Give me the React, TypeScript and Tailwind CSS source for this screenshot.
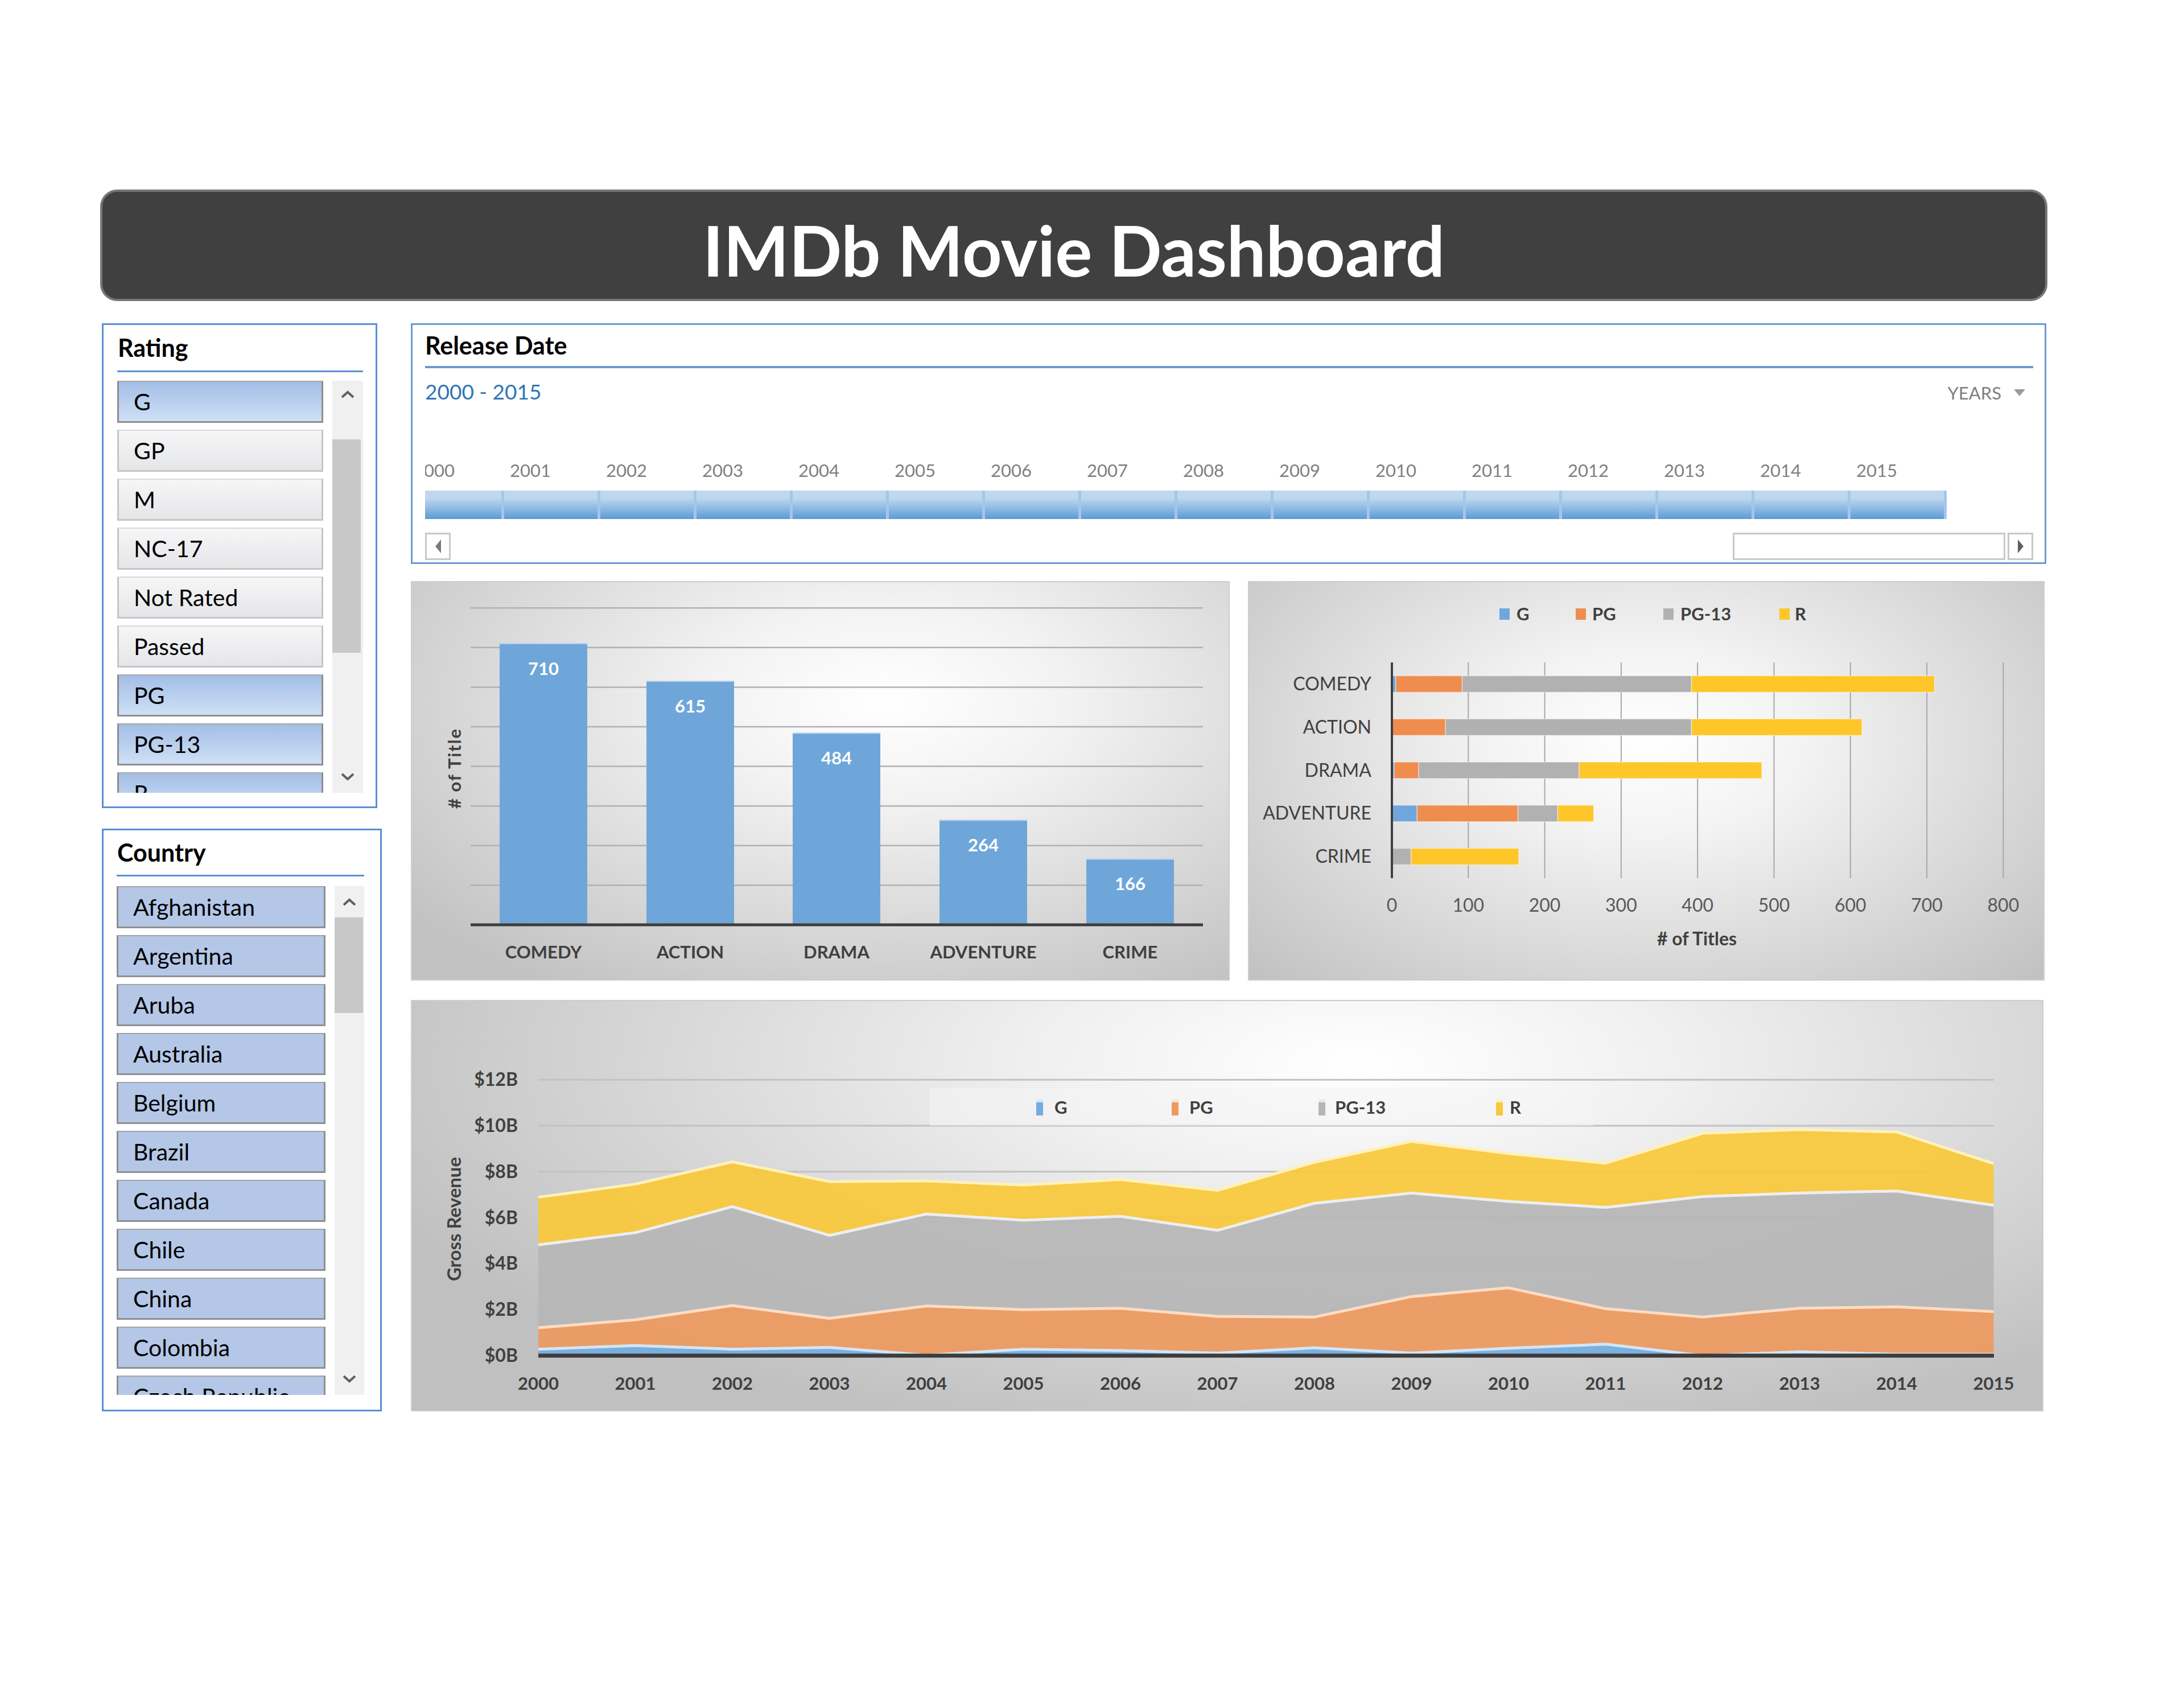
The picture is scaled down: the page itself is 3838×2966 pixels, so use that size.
import React from 'react';

const ratings = [
  { label: 'G', selected: true },
  { label: 'GP', selected: false },
  { label: 'M', selected: false },
  { label: 'NC-17', selected: false },
  { label: 'Not Rated', selected: false },
  { label: 'Passed', selected: false },
  { label: 'PG', selected: true },
  { label: 'PG-13', selected: true },
  { label: 'R', selected: true },
];

const countries = [
  'Afghanistan',
  'Argentina',
  'Aruba',
  'Australia',
  'Belgium',
  'Brazil',
  'Canada',
  'Chile',
  'China',
  'Colombia',
  'Czech Republic',
];

const timelineYears = Array.from({ length: 16 }, (_, i) => 2000 + i);

const genres = [
  { name: 'COMEDY', total: 710, g: 5, pg: 87, pg13: 300, r: 318 },
  { name: 'ACTION', total: 615, g: 0, pg: 70, pg13: 322, r: 223 },
  { name: 'DRAMA', total: 484, g: 3, pg: 32, pg13: 210, r: 239 },
  { name: 'ADVENTURE', total: 264, g: 33, pg: 132, pg13: 52, r: 47 },
  { name: 'CRIME', total: 166, g: 0, pg: 0, pg13: 25, r: 141 },
];

const colors = { g: '#6fa7dc', pg: '#ef8d4f', pg13: '#b1b1b1', r: '#ffc62a' };

// cumulative tops, in $B
const gTop = [0.28, 0.44, 0.28, 0.36, 0.02, 0.28, 0.22, 0.11, 0.34, 0.11, 0.32, 0.5, 0, 0.17, 0.06, 0.06];
const pgTop = [1.21, 1.56, 2.18, 1.62, 2.16, 2.0, 2.06, 1.71, 1.68, 2.57, 2.95, 2.04, 1.68, 2.06, 2.12, 1.92];
const pg13Top = [4.82, 5.35, 6.48, 5.23, 6.16, 5.89, 6.06, 5.45, 6.63, 7.07, 6.71, 6.45, 6.92, 7.07, 7.16, 6.54];
const rTop = [6.89, 7.46, 8.43, 7.57, 7.6, 7.42, 7.66, 7.19, 8.41, 9.32, 8.79, 8.37, 9.67, 9.83, 9.73, 8.35];

const Chevron = ({ up }: { up: boolean }) => (
  <svg width="26" height="14" viewBox="0 0 26 14">
    <polyline
      points={up ? '3,12 13,3 23,12' : '3,2 13,11 23,2'}
      fill="none"
      stroke="#5f5f5f"
      strokeWidth="4"
    />
  </svg>
);

const RatingSlicer = () => (
  <div className="w-[484px] h-[852px] border-[3px] border-[#5b8fd3] pl-[24px] pr-[22px] pb-[24px] flex flex-col bg-white">
    <div className="h-[80px] leading-[80px] text-[43px] font-bold text-black pl-[1px]">Rating</div>
    <div className="h-[3px] bg-[#5b8fd3]" />
    <div className="mt-[15px] flex-1 min-h-0 flex gap-[16px]">
      <div className="w-[362px] overflow-hidden flex flex-col gap-[12px]">
        {ratings.map((r) => (
          <div
            key={r.label}
            className={
              r.selected
                ? 'h-[74px] shrink-0 flex items-center pl-[26px] text-[41px] text-black bg-linear-to-b from-[#a3bee6] to-[#cfe0f6] border-[3px] border-[#8e8e8e] border-t-2 border-t-[#a9a9a9]'
                : 'h-[74px] shrink-0 flex items-center pl-[26px] text-[41px] text-black bg-linear-to-b from-[#f6f6f7] to-[#e5e6e9] border-[3px] border-[#c6c6c6] border-t-2 border-t-[#d8d8d8]'
            }
          >
            {r.label}
          </div>
        ))}
      </div>
      <div className="w-[54px] bg-[#f0f0f0] flex flex-col">
        <div className="h-[48px] flex items-center justify-center">
          <Chevron up />
        </div>
        <div className="h-[55px]" />
        <div className="h-[375px] mr-[4px] bg-[#c8c8c8]" />
        <div className="flex-1" />
        <div className="h-[56px] flex items-center justify-center">
          <Chevron up={false} />
        </div>
      </div>
    </div>
  </div>
);

const CountrySlicer = () => (
  <div className="w-[492px] h-[1024px] border-[3px] border-[#5b8fd3] pl-[23px] pr-[28px] pb-[26px] flex flex-col bg-white">
    <div className="h-[78px] leading-[78px] text-[43px] font-bold text-black pl-[1px]">Country</div>
    <div className="h-[3px] bg-[#5b8fd3]" />
    <div className="mt-[17px] flex-1 min-h-0 flex gap-[16px]">
      <div className="w-[367px] overflow-hidden flex flex-col gap-[12px]">
        {countries.map((c) => (
          <div
            key={c}
            className="h-[74px] shrink-0 flex items-center pl-[26px] text-[41px] text-black whitespace-nowrap bg-[#b4c7e7] border-[3px] border-[#8f8f8f] border-t-2 border-t-[#a3a3a3]"
          >
            {c}
          </div>
        ))}
      </div>
      <div className="w-[52px] bg-[#f0f0f0] flex flex-col">
        <div className="h-[55px] flex items-center justify-center">
          <Chevron up />
        </div>
        <div className="h-[168px] mr-[2px] bg-[#c8c8c8]" />
        <div className="flex-1" />
        <div className="h-[56px] flex items-center justify-center">
          <Chevron up={false} />
        </div>
      </div>
    </div>
  </div>
);

const Timeline = () => (
  <div className="h-[423px] border-[3px] border-[#6a9bd3] pl-[22px] pr-[20px] flex flex-col bg-white">
    <div className="h-[72px] leading-[72px] text-[43px] font-bold text-black">Release Date</div>
    <div className="h-[4px] bg-[#6a9bd3]" />
    <div className="h-[82px] leading-[82px] flex items-baseline justify-between">
      <span className="text-[37px] text-[#2e75b6]">2000 - 2015</span>
      <span className="text-[31px] text-[#7f7f7f] mr-[14px] flex items-center gap-[22px]">
        YEARS
        <svg width="20" height="14" viewBox="0 0 20 14">
          <polygon points="0,1 20,1 10,13" fill="#9a9a9a" />
        </svg>
      </span>
    </div>
    <div className="overflow-hidden">
      <div className="flex -ml-[30px]">
        {timelineYears.map((y) => (
          <div key={y} className="w-[169px] shrink-0 flex flex-col">
            <div className="mt-[77px] h-[40px] leading-[40px] pl-[10px] text-[31px] text-[#7f7f7f]">{y}</div>
            <div className="mt-[16px] h-[50px] bg-linear-to-b from-[#c0d8ef] from-25% to-[#5b9bd5] border-r-[5px] border-[#a4c6ea]" />
          </div>
        ))}
      </div>
    </div>
    <div className="mt-[24px] h-[48px] flex">
      <div className="w-[45px] border-[3px] border-[#c8c8c8] flex items-center justify-center">
        <svg width="12" height="24" viewBox="0 0 12 24">
          <polygon points="11,0 1,12 11,24" fill="#7a7a7a" />
        </svg>
      </div>
      <div className="flex-1" />
      <div className="w-[479px] border-[3px] border-[#c8c8c8] bg-white" />
      <div className="ml-[4px] w-[45px] border-[3px] border-[#c8c8c8] flex items-center justify-center">
        <svg width="12" height="24" viewBox="0 0 12 24">
          <polygon points="1,0 11,12 1,24" fill="#5f5f5f" />
        </svg>
      </div>
    </div>
  </div>
);

const GenreChart = () => {
  const base = 604;
  const unit = 0.696;
  const xs = [233, 491, 748, 1006, 1264];
  return (
    <div className="w-[1439px] h-[702px] border-2 border-[#cdcdcd] bg-[radial-gradient(ellipse_75%_85%_at_58%_30%,#ffffff_0%,#f2f2f2_30%,#c2c2c2_100%)]">
      <svg width="1435" height="698" viewBox="2 2 1435 698" className="block">
        {[1, 2, 3, 4, 5, 6, 7, 8].map((k) => (
          <line key={k} x1={105} x2={1392} y1={base - k * 69.6} y2={base - k * 69.6} stroke="#b1b1b1" strokeWidth={2.5} />
        ))}
        {genres.map((d, i) => {
          const h = d.total * unit;
          const y = base - h;
          return (
            <g key={d.name}>
              <rect x={xs[i] - 77} y={y} width={154} height={h} fill="#6fa6d9" />
              <line x1={xs[i] - 77} x2={xs[i] + 77} y1={y} y2={y} stroke="#bcd5ee" strokeWidth={2} />
              <text x={xs[i]} y={y + 55} textAnchor="middle" fill="#ffffff" fontSize={31} fontWeight={700}>
                {d.total}
              </text>
              <text x={xs[i]} y={663} textAnchor="middle" fill="#404040" fontSize={31} fontWeight={700}>
                {d.name}
              </text>
            </g>
          );
        })}
        <line x1={105} x2={1392} y1={base} y2={base} stroke="#3d3d3d" strokeWidth={5} />
        <text transform="translate(88 329) rotate(-90)" textAnchor="middle" fill="#404040" fontSize={31} fontWeight={700} letterSpacing={2}>
          # of Title
        </text>
      </svg>
    </div>
  );
};

const RatingMixChart = () => {
  const x0 = 253;
  const u = 1.343;
  const keys: Array<'g' | 'pg' | 'pg13' | 'r'> = ['g', 'pg', 'pg13', 'r'];
  const legend = [
    { key: 'g' as const, label: 'G', mx: 442, tx: 472 },
    { key: 'pg' as const, label: 'PG', mx: 576, tx: 605 },
    { key: 'pg13' as const, label: 'PG-13', mx: 730, tx: 760 },
    { key: 'r' as const, label: 'R', mx: 934, tx: 961 },
  ];
  return (
    <div className="w-[1400px] h-[702px] border-2 border-[#cdcdcd] bg-[radial-gradient(ellipse_70%_85%_at_50%_40%,#ffffff_0%,#f3f3f3_28%,#c1c1c1_100%)]">
      <svg width="1396" height="698" viewBox="2 2 1396 698" className="block">
        {legend.map((l) => (
          <g key={l.key}>
            <rect x={l.mx} y={48} width={18} height={20} fill={colors[l.key]} />
            <text x={l.tx} y={69} fill="#404040" fontSize={31} fontWeight={700}>
              {l.label}
            </text>
          </g>
        ))}
        {[1, 2, 3, 4, 5, 6, 7, 8].map((k) => (
          <line key={k} x1={x0 + k * 134.3} x2={x0 + k * 134.3} y1={143} y2={522} stroke="#a8a8a8" strokeWidth={2} />
        ))}
        {genres.map((d, i) => {
          const cy = 143 + 75.8 * (i + 0.5);
          let acc = 0;
          return (
            <g key={d.name}>
              {keys.map((k) => {
                const v = d[k];
                const x = x0 + acc * u;
                acc += v;
                if (v <= 0) return null;
                return (
                  <rect key={k} x={x} y={cy - 14.5} width={v * u} height={29} fill={colors[k]} stroke="#ffffff" strokeOpacity={0.45} strokeWidth={1.5} />
                );
              })}
              <text x={217} y={cy + 11} textAnchor="end" fill="#404040" fontSize={32}>
                {d.name}
              </text>
            </g>
          );
        })}
        <line x1={x0} x2={x0} y1={143} y2={522} stroke="#404040" strokeWidth={4} />
        {[0, 1, 2, 3, 4, 5, 6, 7, 8].map((k) => (
          <text key={k} x={x0 + k * 134.3} y={581} textAnchor="middle" fill="#595959" fontSize={32}>
            {k * 100}
          </text>
        ))}
        <text x={789} y={640} textAnchor="middle" fill="#404040" fontSize={32} fontWeight={700}>
          # of Titles
        </text>
      </svg>
    </div>
  );
};

const RevenueChart = () => {
  const X = (i: number) => 224 + i * 170.5;
  const Y = (v: number) => 625 - v * 40.4;
  const zero = gTop.map(() => 0);
  const line = (vals: number[]) => vals.map((v, i) => `${X(i)},${Y(v)}`).join(' ');
  const band = (lower: number[], upper: number[]) =>
    [...upper.map((v, i) => `${X(i)},${Y(v)}`), ...lower.map((v, i) => `${X(i)},${Y(v)}`).reverse()].join(' ');
  const series = [
    { lower: zero, upper: gTop, fill: '#74ace0', stroke: '#d3e5f5' },
    { lower: gTop, upper: pgTop, fill: '#ee995e', stroke: '#fcdcc4' },
    { lower: pgTop, upper: pg13Top, fill: '#b6b6b6', stroke: '#eeeeee' },
    { lower: pg13Top, upper: rTop, fill: '#f9c83a', stroke: '#fff1b8' },
  ];
  const legend = [
    { label: 'G', fill: '#74ace0', mx: 1099, tx: 1131 },
    { label: 'PG', fill: '#ee995e', mx: 1337, tx: 1368 },
    { label: 'PG-13', fill: '#b6b6b6', mx: 1595, tx: 1624 },
    { label: 'R', fill: '#f9c83a', mx: 1907, tx: 1931 },
  ];
  return (
    <div className="w-[2869px] h-[723px] border-2 border-[#cdcdcd] bg-[radial-gradient(ellipse_65%_95%_at_58%_15%,#ffffff_0%,#f0f0f0_30%,#c0c0c0_100%)]">
      <svg width="2865" height="719" viewBox="2 2 2865 719" className="block">
        {[1, 2, 3, 4, 5, 6].map((k) => (
          <line key={k} x1={224} x2={2782} y1={625 - k * 80.8} y2={625 - k * 80.8} stroke="#c2c2c2" strokeWidth={3} />
        ))}
        <rect x={912} y={155} width={1166} height={66} fill="#f4f4f4" fillOpacity={0.55} />
        {series.map((s, i) => (
          <polygon key={i} points={band(s.lower, s.upper)} fill={s.fill} fillOpacity={0.92} />
        ))}
        {series.map((s, i) => (
          <polyline key={i} points={line(s.upper)} fill="none" stroke={s.stroke} strokeWidth={5} strokeLinejoin="round" />
        ))}
        <line x1={224} x2={2782} y1={625} y2={625} stroke="#3c3c3c" strokeWidth={7} />
        {[0, 1, 2, 3, 4, 5, 6].map((k) => (
          <text key={k} x={188} y={625 - k * 80.8 + 11} textAnchor="end" fill="#404040" fontSize={32} fontWeight={700}>
            ${k * 2}B
          </text>
        ))}
        {timelineYears.map((y, i) => (
          <text key={y} x={X(i)} y={685} textAnchor="middle" fill="#404040" fontSize={31} fontWeight={700}>
            {y}
          </text>
        ))}
        {legend.map((l) => (
          <g key={l.label}>
            <rect x={l.mx} y={175} width={12} height={28} fill={l.fill} />
            <rect x={l.mx} y={175} width={12} height={5} fill="#ffffff" fillOpacity={0.7} />
            <text x={l.tx} y={200} fill="#404040" fontSize={31} fontWeight={700}>
              {l.label}
            </text>
          </g>
        ))}
        <text transform="translate(88 385) rotate(-90)" textAnchor="middle" fill="#404040" fontSize={33} fontWeight={700}>
          Gross Revenue
        </text>
      </svg>
    </div>
  );
};

export default function App() {
  return (
    <div className="w-[3838px] h-[2966px] bg-white font-['Lato',sans-serif] pt-[333px] pl-[176px]">
      <div className="w-[3422px]">
        <div className="h-[196px] rounded-[30px] border-4 border-[#767676] bg-[#404040] pt-[16px] text-center text-white text-[122px] font-bold leading-[172px]">
          IMDb Movie Dashboard
        </div>

        <div className="mt-[39px] flex">
          <div className="w-[495px] pl-[3px] flex flex-col gap-[36px]">
            <RatingSlicer />
            <CountrySlicer />
          </div>

          <div className="ml-[51px] w-[2874px] flex flex-col">
            <Timeline />
            <div className="mt-[30px] flex gap-[32px]">
              <GenreChart />
              <RatingMixChart />
            </div>
            <div className="mt-[34px]">
              <RevenueChart />
            </div>
          </div>
        </div>
      </div>
    </div>
  );
}
